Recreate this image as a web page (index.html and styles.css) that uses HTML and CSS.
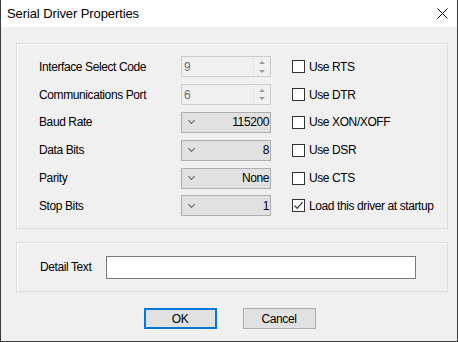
FILE: index.html
```html
<!DOCTYPE html>
<html lang="en">
<head>
    <meta charset="UTF-8">
    <title>Serial Driver Properties</title>
    <link rel="stylesheet" href="styles.css">
</head>
<body>
    <div class="window">
        <div class="titlebar">
            <span class="title">Serial Driver Properties</span>
            <span class="close">
                <svg width="11" height="11" viewBox="0 0 11 11"><path d="M0.5 0.5 L10.5 10.5 M10.5 0.5 L0.5 10.5" stroke="#000" stroke-width="1"/></svg>
            </span>
        </div>

        <div class="content">
            <div class="group settings">
                <div class="fields">
                    <div class="row">
                        <label>Interface Select Code</label>
                        <div class="spin disabled">
                            <span class="value">9</span>
                            <span class="arrows"><i class="up"></i><i class="down"></i></span>
                        </div>
                    </div>
                    <div class="row">
                        <label>Communications Port</label>
                        <div class="spin disabled">
                            <span class="value">6</span>
                            <span class="arrows"><i class="up"></i><i class="down"></i></span>
                        </div>
                    </div>
                    <div class="row">
                        <label>Baud Rate</label>
                        <div class="combo"><span class="chev"></span><span class="value">115200</span></div>
                    </div>
                    <div class="row">
                        <label>Data Bits</label>
                        <div class="combo"><span class="chev"></span><span class="value">8</span></div>
                    </div>
                    <div class="row">
                        <label>Parity</label>
                        <div class="combo"><span class="chev"></span><span class="value">None</span></div>
                    </div>
                    <div class="row">
                        <label>Stop Bits</label>
                        <div class="combo"><span class="chev"></span><span class="value">1</span></div>
                    </div>
                </div>

                <div class="checks">
                    <div class="check"><span class="box"></span>Use RTS</div>
                    <div class="check"><span class="box"></span>Use DTR</div>
                    <div class="check"><span class="box"></span>Use XON/XOFF</div>
                    <div class="check"><span class="box"></span>Use DSR</div>
                    <div class="check"><span class="box"></span>Use CTS</div>
                    <div class="check">
                        <span class="box">
                            <svg width="11" height="11" viewBox="0 0 11 11"><path d="M1.5 5.5 L4.2 8.3 L9.5 2.2" fill="none" stroke="#333" stroke-width="1.2"/></svg>
                        </span>Load this driver at startup
                    </div>
                </div>
            </div>

            <div class="group detail">
                <label>Detail Text</label>
                <div class="textbox"></div>
            </div>

            <div class="buttons">
                <button class="btn default">OK</button>
                <button class="btn">Cancel</button>
            </div>
        </div>
    </div>
</body>
</html>
```

FILE: styles.css
```css
* {
    box-sizing: border-box;
}

body {
    margin: 0;
    font-family: 'Liberation Sans', Arial, sans-serif;
    font-size: 12px;
    letter-spacing: -0.4px;
    color: #000;
}

.window {
    width: 458px;
    height: 342px;
    border: 1px solid #3a3a3a;
    border-top: none;
    background: #f0f0f0;
    display: flex;
    flex-direction: column;
}

.titlebar {
    height: 27px;
    background: #fff;
    display: flex;
    align-items: center;
    justify-content: space-between;
    padding-left: 6px;
}

.title {
    font-size: 13px;
    letter-spacing: -0.1px;
}

.close {
    width: 30px;
    height: 27px;
    display: flex;
    align-items: center;
    justify-content: center;
}

.content {
    padding: 16px 9px 0 15px;
}

.group {
    border: 1px solid #dcdcdc;
    box-shadow: inset 1px 1px 0 #fff;
}

.settings {
    height: 186px;
    display: flex;
    padding: 9px 0 0 22px;
}

.fields {
    width: 232px;
}

.row {
    height: 27.8px;
    display: flex;
    align-items: center;
}

.row label {
    width: 142px;
}

.spin,
.combo {
    width: 90px;
    height: 21px;
    display: flex;
    align-items: center;
}

.spin {
    border: 1px solid #cccccc;
    background: #f0f0f0;
    color: #6d6d6d;
    padding-left: 2px;
}

.spin .value {
    flex: 1;
}

.arrows {
    width: 16px;
    height: 17px;
    margin-right: 1px;
    border-left: 1px solid #e3e3e3;
    display: flex;
    flex-direction: column;
    align-items: center;
    justify-content: space-around;
}

.arrows i {
    width: 0;
    height: 0;
    border-left: 3px solid transparent;
    border-right: 3px solid transparent;
}

.arrows .up {
    border-bottom: 3px solid #9a9a9a;
}

.arrows .down {
    border-top: 3px solid #9a9a9a;
}

.combo {
    border: 1px solid #adadad;
    background: #e1e1e1;
    padding: 0 1px 0 7px;
}

.chev {
    width: 5px;
    height: 5px;
    border-right: 1px solid #606060;
    border-bottom: 1px solid #606060;
    transform: rotate(45deg);
    margin-top: -3px;
}

.combo .value {
    flex: 1;
    text-align: right;
}

.checks {
    padding-left: 21px;
}

.check {
    height: 27.8px;
    display: flex;
    align-items: center;
    white-space: nowrap;
}

.box {
    width: 13px;
    height: 13px;
    border: 1px solid #333;
    background: #fff;
    margin-right: 4px;
    display: flex;
    align-items: center;
    justify-content: center;
}

.detail {
    margin-top: 13px;
    height: 50px;
    display: flex;
    align-items: center;
    padding-left: 23px;
}

.detail label {
    width: 66px;
}

.textbox {
    width: 310px;
    height: 23px;
    border: 1px solid #7a7a7a;
    background: #fff;
}

.buttons {
    display: flex;
    justify-content: center;
    gap: 26px;
    padding: 16px 5px 0 0;
}

.btn {
    width: 73px;
    height: 21px;
    font-family: inherit;
    font-size: 12px;
    letter-spacing: inherit;
    background: #e1e1e1;
    border: 1px solid #adadad;
    padding: 0;
}

.btn.default {
    border: 2px solid #0078d7;
}
```
